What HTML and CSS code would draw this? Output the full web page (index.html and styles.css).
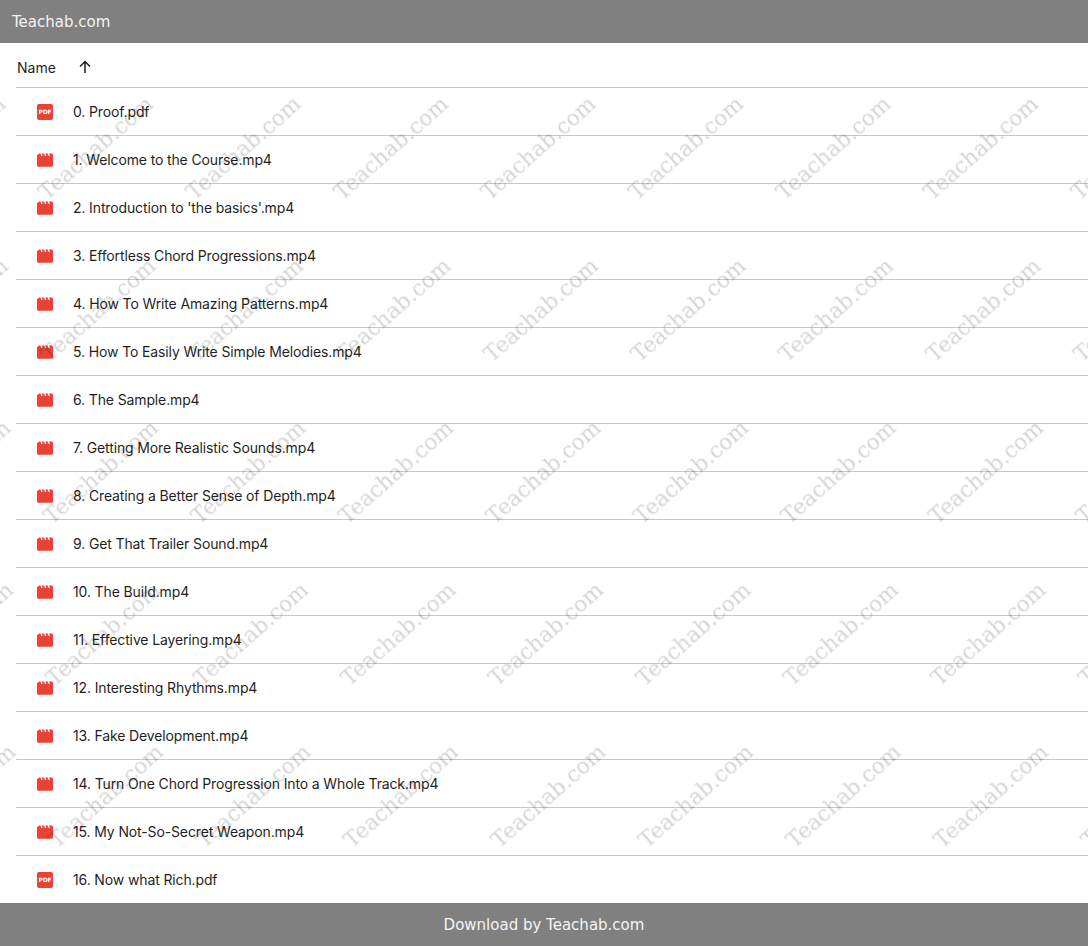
FILE: index.html
```html
<!DOCTYPE html>
<html lang="en">
<head>
  <meta charset="UTF-8" />
  <meta name="viewport" content="width=device-width, initial-scale=1.0" />
  <title>Teachab.com</title>
  <link rel="stylesheet" href="styles.css">
</head>
<body>
  <svg width="0" height="0" class="defs">
    <symbol id="icon-video" viewBox="0 0 16 16">
      <path fill="#ea4335" d="M0 3.2 L2.2 1.5 H3.4 L4.600 4 H5.800 L4.600 1.500 H7 L8.200 4 H9.400 L8.200 1.500 H10.600 L11.800 4 H13 L11.800 1.500 H14.400 C15.300 1.500 16 2.200 16 3.100 V13.200 C16 14.100 15.300 14.800 14.400 14.800 H1.600 C.7 14.800 0 14.100 0 13.200 Z" />
    </symbol>
  </svg>

  <header class="topbar">Teachab.com</header>

  <main class="list">
    <div class="list-head">
      <span>Name</span>
      <svg class="sort-arrow" width="16" height="16" viewBox="0 0 16 16"><path d="M8 14 V3 M3 7.500 L8 2.500 L13 7.500" fill="none" stroke="#1f1f1f" stroke-width="1.500" /></svg>
    </div>
    <div class="row"><svg class="icon" viewBox="0 0 16 16"><rect width="16" height="16" rx="2" fill="#ea4335" /><text x="8" y="10.400" text-anchor="middle" class="pdf-label">PDF</text></svg><span>0. Proof.pdf</span></div>
    <div class="row"><svg class="icon"><use href="#icon-video" /></svg><span>1. Welcome to the Course.mp4</span></div>
    <div class="row"><svg class="icon"><use href="#icon-video" /></svg><span>2. Introduction to 'the basics'.mp4</span></div>
    <div class="row"><svg class="icon"><use href="#icon-video" /></svg><span>3. Effortless Chord Progressions.mp4</span></div>
    <div class="row"><svg class="icon"><use href="#icon-video" /></svg><span>4. How To Write Amazing Patterns.mp4</span></div>
    <div class="row"><svg class="icon"><use href="#icon-video" /></svg><span>5. How To Easily Write Simple Melodies.mp4</span></div>
    <div class="row"><svg class="icon"><use href="#icon-video" /></svg><span>6. The Sample.mp4</span></div>
    <div class="row"><svg class="icon"><use href="#icon-video" /></svg><span>7. Getting More Realistic Sounds.mp4</span></div>
    <div class="row"><svg class="icon"><use href="#icon-video" /></svg><span>8. Creating a Better Sense of Depth.mp4</span></div>
    <div class="row"><svg class="icon"><use href="#icon-video" /></svg><span>9. Get That Trailer Sound.mp4</span></div>
    <div class="row"><svg class="icon"><use href="#icon-video" /></svg><span>10. The Build.mp4</span></div>
    <div class="row"><svg class="icon"><use href="#icon-video" /></svg><span>11. Effective Layering.mp4</span></div>
    <div class="row"><svg class="icon"><use href="#icon-video" /></svg><span>12. Interesting Rhythms.mp4</span></div>
    <div class="row"><svg class="icon"><use href="#icon-video" /></svg><span>13. Fake Development.mp4</span></div>
    <div class="row"><svg class="icon"><use href="#icon-video" /></svg><span>14. Turn One Chord Progression Into a Whole Track.mp4</span></div>
    <div class="row"><svg class="icon"><use href="#icon-video" /></svg><span>15. My Not-So-Secret Weapon.mp4</span></div>
    <div class="row"><svg class="icon" viewBox="0 0 16 16"><rect width="16" height="16" rx="2" fill="#ea4335" /><text x="8" y="10.400" text-anchor="middle" class="pdf-label">PDF</text></svg><span>16. Now what Rich.pdf</span></div>

    <!-- watermark sits over the whole list -->
    <svg class="watermark" width="100%" height="100%">
      <defs>
        <pattern id="wm" width="147.500" height="162" patternUnits="userSpaceOnUse" patternTransform="translate(35 35) skewX(0.880)">
          <text class="wm-text" transform="translate(10 123) rotate(-41)">Teachab.com</text>
        </pattern>
      </defs>
      <rect width="100%" height="100%" fill="url(#wm)" />
    </svg>
  </main>

  <footer class="bottombar">Download by Teachab.com</footer>
</body>
</html>
```

FILE: styles.css
```css
body {
  margin: 0;
  background: white;
  font-family: Inter, sans-serif;
  color: #1f1f1f;
}
.defs {
  position: absolute;
}
.topbar {
  background-color: #808080;
  color: #f4f4f4;
  height: 43px;
  line-height: 45px;
  padding-left: 12px;
  font-family: "DejaVu Sans", sans-serif;
  font-size: 15px;
}
.bottombar {
  background-color: #808080;
  color: #f4f4f4;
  height: 43px;
  line-height: 45px;
  text-align: center;
  font-family: "DejaVu Sans", sans-serif;
  font-size: 15px;
}
.list {
  position: relative;
  height: 860px;
}
.list-head {
  height: 45px;
  box-sizing: border-box;
  margin-left: 16px;
  padding: 5px 0 0 1px;
  display: flex;
  align-items: center;
  gap: 21px;
  font-size: 14px;
  border-bottom: 1px solid #c7c7c7;
}
.sort-arrow {
  margin-top: -2px;
}
.row {
  height: 48px;
  box-sizing: border-box;
  margin-left: 16px;
  padding-left: 21px;
  display: flex;
  align-items: center;
  gap: 20px;
  font-size: 14px;
  letter-spacing: -0.13px;
  border-bottom: 1px solid #c7c7c7;
}
.row:last-of-type {
  border-bottom: none;
  padding-bottom: 1px;
}
.icon {
  width: 16px;
  height: 16px;
  flex: none;
}
.pdf-label {
  font-family: "DejaVu Sans", sans-serif;
  font-size: 6px;
  font-weight: 700;
  fill: white;
}
.watermark {
  position: absolute;
  left: 0;
  top: 0;
  pointer-events: none;
}
.wm-text {
  font-family: "DejaVu Serif", serif;
  font-size: 21.800px;
  fill: rgba(0, 0, 0, 0.17);
}
```
